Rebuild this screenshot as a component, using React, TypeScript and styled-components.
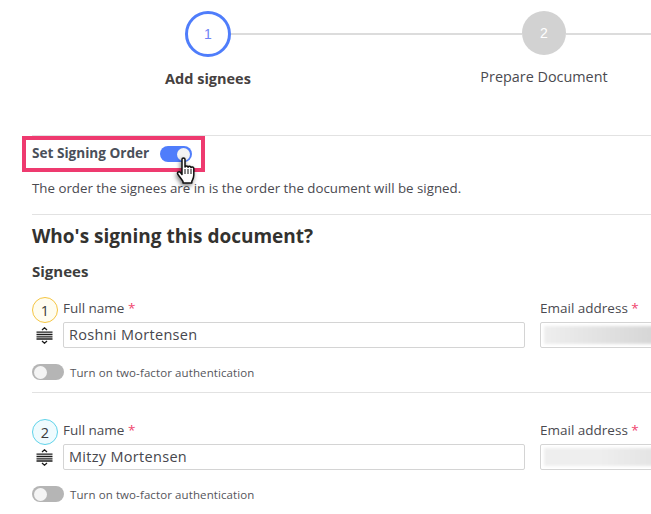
import React from 'react';
import styled, { createGlobalStyle } from 'styled-components';

const GlobalStyle = createGlobalStyle`
  html, body {
    margin: 0;
    padding: 0;
    background: #fff;
    overflow: hidden;
  }
  body {
    font-family: "Open Sans", "Noto Sans", "Liberation Sans", sans-serif;
    color: #3f3f46;
  }
`;

const Page = styled.div`
  width: 651px;
  height: 514px;
  overflow: hidden;
  background: #fff;
`;

const Track = styled.div`
  display: flex;
  align-items: center;
  height: 46px;
  padding: 11px 0 0 185px;
`;

const Circle = styled.div<{ $active?: boolean }>`
  box-sizing: border-box;
  flex: none;
  width: ${p => (p.$active ? 46 : 44)}px;
  height: ${p => (p.$active ? 46 : 44)}px;
  margin-top: ${p => (p.$active ? 0 : -2)}px;
  border-radius: 50%;
  display: flex;
  align-items: center;
  justify-content: center;
  font: 14px "Liberation Sans", sans-serif;
  border: ${p => (p.$active ? '3px solid #4f7dfb' : 'none')};
  background: ${p => (p.$active ? '#fff' : '#d2d2d2')};
  color: ${p => (p.$active ? '#6f84f5' : '#fff')};
`;

const Line = styled.div<{ $width?: number }>`
  height: 2px;
  background: #dcdcdc;
  ${p => (p.$width ? `width: ${p.$width}px; flex: none;` : 'flex: 1;')}
`;

const Labels = styled.div`
  display: flex;
  width: 672px;
  padding-left: 40px;
`;

const StepLabel = styled.div<{ $active?: boolean }>`
  width: 336px;
  flex: none;
  text-align: center;
  font-size: ${p => (p.$active ? 14.5 : 14.4)}px;
  font-weight: ${p => (p.$active ? 700 : 400)};
  line-height: 20px;
  margin-top: ${p => (p.$active ? 12 : 10)}px;
  color: ${p => (p.$active ? '#46413f' : '#4a4a50')};
`;

const Content = styled.div`
  margin: 46px 0 0 32px;
  border-top: 1px solid #e2e2e2;
`;

const OrderRow = styled.div`
  display: flex;
  align-items: center;
  gap: 11px;
  position: relative;
  height: 34px;
  margin-top: 1px;
  font-size: 13.6px;
  line-height: 30px;
  font-weight: 700;
  color: #4a505a;
  white-space: nowrap;
`;

const Highlight = styled.div`
  position: absolute;
  left: -10px;
  top: -1px;
  width: 183px;
  height: 36px;
  box-sizing: border-box;
  border: 4px solid #ee3a6f;
`;

const OrderText = styled.span`
  margin-top: -2px;
`;

const Toggle = styled.div<{ $on?: boolean }>`
  flex: none;
  position: relative;
  width: 32px;
  height: 16px;
  border-radius: 8px;
  background: ${p => (p.$on ? '#4f7dfb' : '#b5b5b5')};

  &::after {
    content: '';
    position: absolute;
    top: 1.5px;
    left: ${p => (p.$on ? 17 : 2)}px;
    width: 13px;
    height: 13px;
    border-radius: 50%;
    background: #f4f4f4;
  }
`;

const Cursor = styled.svg`
  position: absolute;
  left: 144px;
  top: 20px;
  filter: drop-shadow(-1px 2px 2px rgba(0, 0, 0, 0.5));
`;

const Description = styled.p`
  margin: 8px 0 0;
  font-size: 13.3px;
  line-height: 18px;
  color: #4a4a50;
  white-space: nowrap;
`;

const Divider = styled.div`
  height: 1px;
  background: #e2e2e2;
`;

const DescDivider = styled(Divider)`
  margin-top: 17px;
`;

const Heading = styled.h2`
  margin: 8px 0 0;
  font-size: 19px;
  line-height: 27px;
  font-weight: 700;
  color: #33322f;
`;

const Subheading = styled.h3`
  margin: 11px 0 0;
  font-size: 15px;
  line-height: 20px;
  font-weight: 700;
  color: #3d3d3d;
`;

const Signee = styled.div<{ $second?: boolean }>`
  display: grid;
  grid-template-columns: 26px 462px 5px 200px;
  column-gap: 5px;
  grid-template-rows: 25px 26px;
  margin-top: ${p => (p.$second ? 26 : 16)}px;
`;

const Badge = styled.div<{ $color: string; $tint: string }>`
  box-sizing: border-box;
  width: 26px;
  height: 26px;
  border-radius: 50%;
  border: 1px solid ${p => p.$color};
  background: ${p => p.$tint};
  display: flex;
  align-items: center;
  justify-content: center;
  font-size: 14.5px;
  color: #3a3a3a;
`;

const FieldLabel = styled.label`
  font-size: 13.5px;
  line-height: 22px;
  color: #4a4a50;
  white-space: nowrap;
`;

const Star = styled.span`
  color: #f0446e;
`;

const Handle = styled.div`
  display: flex;
  align-items: center;
  padding-left: 4px;
`;

const TextBox = styled.div`
  box-sizing: border-box;
  height: 26px;
  padding: 0 5px 2px;
  border: 1px solid #d4d4d4;
  border-radius: 2px;
  display: flex;
  align-items: center;
  font-size: 14.5px;
  letter-spacing: 0.3px;
  color: #47474d;
`;

const EmailBox = styled.div`
  box-sizing: border-box;
  height: 26px;
  width: 200px;
  border: 1px solid #d4d4d4;
  border-radius: 2px;
  padding: 3px;
  overflow: hidden;
`;

const Blurred = styled.div<{ $second?: boolean }>`
  height: 18px;
  width: 220px;
  filter: blur(1.5px);
  background: linear-gradient(
    90deg,
    #eeeeee 0%,
    ${p => (p.$second ? '#eeeeee' : '#e2e2e2')} 25%,
    ${p => (p.$second ? '#e4e4e4' : '#d6d6d6')} 50%,
    #e8e8e8 70%,
    #dedede 100%
  );
`;

const AuthRow = styled.div`
  display: flex;
  align-items: center;
  gap: 6px;
  height: 16px;
  margin-top: 16px;
  font-size: 11.5px;
  letter-spacing: 0.1px;
  color: #55555b;
  white-space: nowrap;
`;

const Separator = styled(Divider)`
  margin-top: 12px;
`;

const DragIcon = () => (
  <svg width="17" height="17" viewBox="0 0 17 17" fill="none" stroke="#1c1c1c" strokeWidth="1.3">
    <path d="M6 3 8.5 .8 11 3" />
    <path d="M0.5 5.2h16M0.5 7.5h16M0.5 9.8h16M0.5 12h16" />
    <path d="M6 14 8.5 16.2 11 14" />
  </svg>
);

const HandCursor = () => (
  <Cursor width="20" height="28" viewBox="0 0 20 28">
    <path
      d="M6 2.2c0-1.6 3-1.6 3 0V10c.4-1.4 3-1.4 3 .2.4-1.2 2.8-1.2 3 .4.6-1 2.8-.8 2.8 1V18c0 3-1.2 4.5-2 6.5V26H7v-1.500c-1.2-2-3-4.200-5-7-1.400-2 .8-3.800 2.500-2L6 17.500Z"
      fill="#fff"
      stroke="#111"
      strokeWidth="1.5"
      strokeLinejoin="round"
    />
    <path d="M9 12v5M12 12v5M15 12v5" stroke="#111" strokeWidth="1" />
  </Cursor>
);

const SigneeRow = ({
  index,
  name,
  color,
  tint,
  second,
}: {
  index: number;
  name: string;
  color: string;
  tint: string;
  second?: boolean;
}) => (
  <>
    <Signee $second={second}>
      <Badge $color={color} $tint={tint}>{index}</Badge>
      <FieldLabel>Full name <Star>*</Star></FieldLabel>
      <span />
      <FieldLabel>Email address <Star>*</Star></FieldLabel>
      <Handle><DragIcon /></Handle>
      <TextBox>{name}</TextBox>
      <span />
      <EmailBox><Blurred $second={second} /></EmailBox>
    </Signee>
    <AuthRow>
      <Toggle />
      Turn on two-factor authentication
    </AuthRow>
  </>
);

export default function App() {
  return (
    <Page>
      <GlobalStyle />
      <Track>
        <Circle $active>1</Circle>
        <Line $width={291} />
        <Circle>2</Circle>
        <Line />
      </Track>
      <Labels>
        <StepLabel $active>Add signees</StepLabel>
        <StepLabel>Prepare Document</StepLabel>
      </Labels>
      <Content>
        <OrderRow>
          <Highlight />
          <OrderText>Set Signing Order</OrderText>
          <Toggle $on />
          <HandCursor />
        </OrderRow>
        <Description>The order the signees are in is the order the document will be signed.</Description>
        <DescDivider />
        <Heading>Who's signing this document?</Heading>
        <Subheading>Signees</Subheading>
        <SigneeRow index={1} name="Roshni Mortensen" color="#f5c542" tint="#fffdf0" />
        <Separator />
        <SigneeRow index={2} name="Mitzy Mortensen" color="#5fd3ea" tint="#effbfe" second />
      </Content>
    </Page>
  );
}
